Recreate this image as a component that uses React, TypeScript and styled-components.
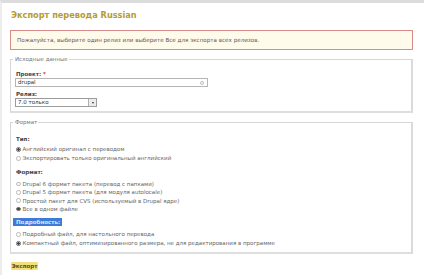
import React from "react";
import styled, { createGlobalStyle } from "styled-components";

const Global = createGlobalStyle`
  html, body { margin: 0; padding: 0; background: #fff; }
  body { font-family: "DejaVu Sans", Verdana, sans-serif; color: #555; }
  * { box-sizing: border-box; }
`;

const Page = styled.div`
  border-top: 3px solid #dcdcdc;
  border-left: 2px solid #ececec;
  width: 424px;
  height: 275px;
  padding: 0 11px 0 8px;
`;

const Title = styled.h1`
  margin: 0;
  padding-top: 8px;
  height: 27px;
  font-size: 8.2px;
  line-height: 9px;
  font-weight: bold;
  color: #b39c33;
  padding-left: 1px;
`;

const ErrorBox = styled.div`
  height: 20px;
  border: 1px solid #d98a8a;
  background: #fffbea;
  color: #6a5050;
  font-size: 5.6px;
  line-height: 18px;
  padding-left: 6px;
  white-space: nowrap;
`;

const Fieldset = styled.fieldset<{ $mt: number; $h: number }>`
  margin: ${(p) => p.$mt}px 0 0 0;
  height: ${(p) => p.$h}px;
  padding: 0 4px;
  border: 1px solid #d6d6d6;
  border-right: 2px solid #dadada;
  border-bottom: 2px solid #dedede;
  min-width: 0;
`;

const Legend = styled.legend`
  font-size: 5.5px;
  line-height: 8px;
  padding: 0 1px 0 2px;
  margin-left: -2px;
  color: #777;
`;

const Label = styled.div<{ $mt?: number }>`
  font-size: 5.5px;
  line-height: 8px;
  font-weight: bold;
  color: #444;
  margin-top: ${(p) => p.$mt ?? 0}px;
  padding-left: 1px;
`;

const Req = styled.span`
  color: #d33;
`;

const InputBox = styled.div`
  position: relative;
  width: 193px;
  height: 9px;
  border: 1px solid #b5b5b5;
  font-size: 5.5px;
  line-height: 7px;
  padding-left: 2px;
  color: #333;
`;

const Throbber = styled.span`
  position: absolute;
  right: 3px;
  top: 1.5px;
  width: 4px;
  height: 4px;
  border: 1px solid #bbb;
  border-radius: 50%;
`;

const SelectBox = styled.div`
  display: flex;
  width: 82px;
  height: 9px;
  border: 1px solid #9c9c9c;
  font-size: 5.5px;
  line-height: 7px;
  color: #333;
`;

const SelectText = styled.div`
  flex: 1;
  padding-left: 2px;
`;

const SelectArrow = styled.div`
  width: 8px;
  border-left: 1px solid #b0b0b0;
  background: #ececec;
  display: flex;
  align-items: center;
  justify-content: center;
  &::after {
    content: "";
    border-left: 1.5px solid transparent;
    border-right: 1.5px solid transparent;
    border-top: 2px solid #333;
  }
`;

const Radios = styled.div<{ $mt?: number; $lh: number }>`
  margin-top: ${(p) => p.$mt ?? 0}px;
  display: flex;
  flex-direction: column;
  font-size: 5.5px;
  line-height: ${(p) => p.$lh}px;
  color: #666;
`;

const RadioRow = styled.div`
  display: flex;
  align-items: center;
  gap: 2px;
  white-space: nowrap;
  padding-left: 1px;
`;

const Dot = styled.span<{ $on?: boolean }>`
  width: 4.5px;
  height: 4.5px;
  border-radius: 50%;
  border: 0.8px solid ${(p) => (p.$on ? "#777" : "#bbb")};
  background: ${(p) => (p.$on ? "radial-gradient(circle, #444 0 1.2px, #fff 1.5px)" : "#fff")};
  flex: none;
`;

const Highlight = styled.span`
  display: inline-block;
  background: #3d7bd6;
  color: #dbe8ff;
  padding: 0 2px 0 3px;
  margin-left: -3px;
`;

const Button = styled.div`
  margin: 8px 0 0 1px;
  width: 27px;
  height: 8px;
  background: #f3df7c;
  border-radius: 1px;
  font-size: 5.5px;
  line-height: 8px;
  font-weight: bold;
  color: #5a4a20;
  text-align: center;
`;

function Radio({ on, children }: { on?: boolean; children: React.ReactNode }) {
  return (
    <RadioRow>
      <Dot $on={on} />
      <span>{children}</span>
    </RadioRow>
  );
}

export default function App() {
  return (
    <>
      <Global />
      <Page>
        <Title>Экспорт перевода Russian</Title>
        <ErrorBox>Пожалуйста, выберите один релиз или выберите Все для экспорта всех релизов.</ErrorBox>
        <Fieldset $mt={5} $h={58}>
          <Legend>Исходные данные</Legend>
          <Label $mt={7}>
            Проект: <Req>*</Req>
          </Label>
          <InputBox>
            drupal
            <Throbber />
          </InputBox>
          <Label $mt={3}>Релиз:</Label>
          <SelectBox>
            <SelectText>7.0 только</SelectText>
            <SelectArrow />
          </SelectBox>
        </Fieldset>
        <Fieldset $mt={5} $h={136}>
          <Legend>Формат</Legend>
          <Label $mt={9}>Тип:</Label>
          <Radios $mt={2} $lh={9}>
            <Radio on>Английский оригинал с переводом</Radio>
            <Radio>Экспортировать только оригинальный английский</Radio>
          </Radios>
          <Label $mt={5}>Формат:</Label>
          <Radios $mt={4} $lh={8.3}>
            <Radio>Drupal 6 формат пакета (перевод с папками)</Radio>
            <Radio>Drupal 5 формат пакета (для модуля autolocale)</Radio>
            <Radio>Простой пакет для CVS (используемый в Drupal ядре)</Radio>
            <Radio on>Все в одном файле</Radio>
          </Radios>
          <Label $mt={5}>
            <Highlight>Подробность:</Highlight>
          </Label>
          <Radios $mt={4} $lh={9}>
            <Radio>Подробный файл, для настольного перевода</Radio>
            <Radio on>Компактный файл, оптимизированного размера, не для редактирования в программе</Radio>
          </Radios>
        </Fieldset>
        <Button>Экспорт</Button>
      </Page>
    </>
  );
}
